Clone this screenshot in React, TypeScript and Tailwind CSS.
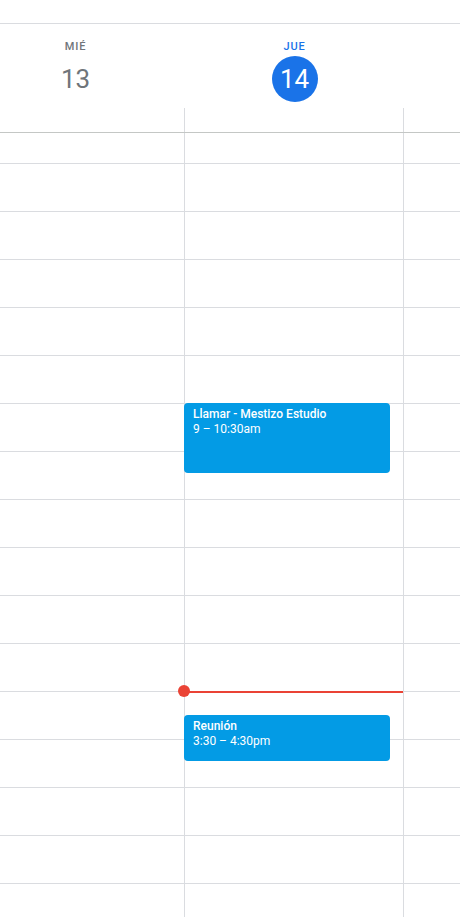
const rows = Array.from({ length: 16 });

type Ev = { title: string; time: string; top: number; height: number };

const events: Ev[] = [
  { title: "Llamar - Mestizo Estudio", time: "9 – 10:30am", top: 270, height: 70 },
  { title: "Reunión", time: "3:30 – 4:30pm", top: 582, height: 46 },
];

function GridRows() {
  return (
    <>
      <div className="h-[31px] border-b border-[#dadce0]" />
      {rows.map((_, i) => (
        <div key={i} className="h-[48px] border-b border-[#dadce0]" />
      ))}
    </>
  );
}

function DayHeader({ label, day, today }: { label: string; day: string; today?: boolean }) {
  return (
    <div className="w-[219px] shrink-0 flex flex-col items-center pt-[15px]">
      <span
        className={`text-[11px] leading-4 font-medium tracking-[0.8px] ${today ? "text-[#1a73e8]" : "text-[#70757a]"}`}
      >
        {label}
      </span>
      <div
        className={`mt-px w-[46px] h-[46px] rounded-full flex items-center justify-center text-[26px] leading-none ${
          today ? "bg-[#1a73e8] text-white" : "text-[#70757a]"
        }`}
      >
        {day}
      </div>
    </div>
  );
}

export default function App() {
  return (
    <div className="w-[460px] h-[917px] overflow-hidden bg-white font-['Roboto',sans-serif]">
      {/* top bar edge */}
      <div className="h-6 border-b border-[#dadce0]" />

      {/* day headers */}
      <div className="flex h-[84px] -ml-[34px]">
        <DayHeader label="MIÉ" day="13" />
        <DayHeader label="JUE" day="14" today />
        <div className="w-[219px] shrink-0" />
      </div>

      {/* all-day strip */}
      <div className="flex h-[25px] -ml-[34px] border-b border-[#c4c7c5]">
        <div className="w-[219px] shrink-0 border-r border-[#dadce0]" />
        <div className="w-[219px] shrink-0 border-r border-[#dadce0]" />
        <div className="w-[219px] shrink-0" />
      </div>

      {/* time grid */}
      <div className="flex -ml-[34px] h-[790px]">
        <div className="w-[219px] shrink-0 border-r border-[#dadce0]">
          <GridRows />
        </div>

        <div className="relative w-[219px] shrink-0 border-r border-[#dadce0]">
          <GridRows />

          {events.map((ev) => (
            <div
              key={ev.title}
              className="absolute -left-px w-[206px] rounded-[4px] bg-[#039be5] pl-[9px] pr-2 pt-[4px] text-white text-[12px] leading-[15px]"
              style={{ top: ev.top, height: ev.height }}
            >
              <div className="font-medium truncate">{ev.title}</div>
              <div>{ev.time}</div>
            </div>
          ))}

          {/* current time */}
          <div className="absolute left-0 right-0 top-[558px] h-[2px] bg-[#ea4335]" />
          <div className="absolute -left-[7px] top-[552px] w-3 h-3 rounded-full bg-[#ea4335]" />
        </div>

        <div className="w-[219px] shrink-0">
          <GridRows />
        </div>
      </div>
    </div>
  );
}
